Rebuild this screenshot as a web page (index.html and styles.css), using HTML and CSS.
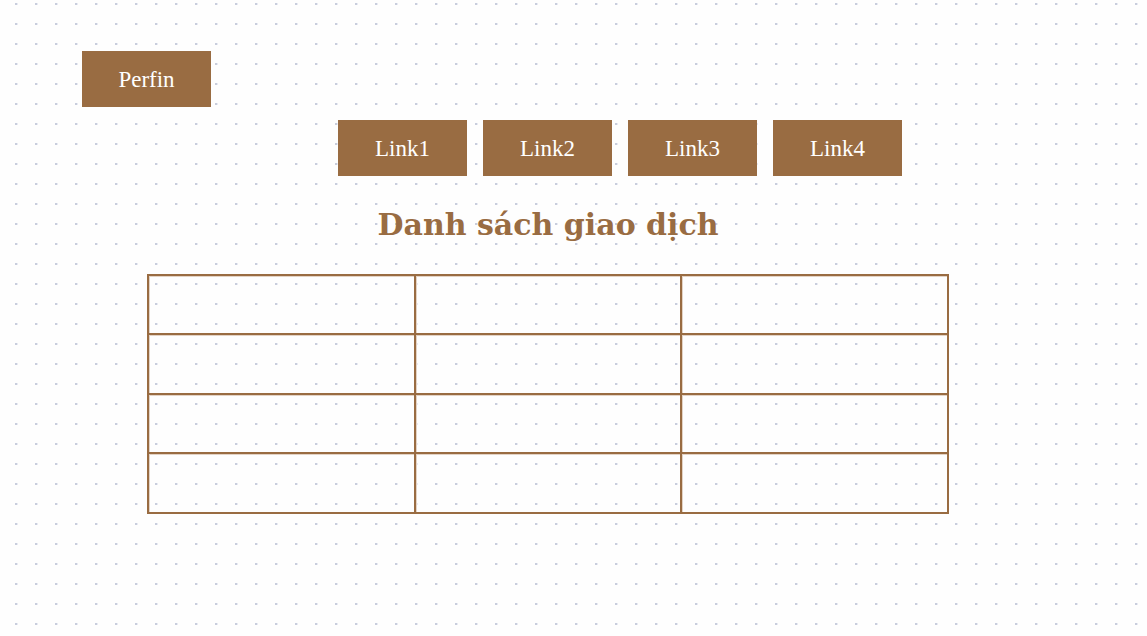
FILE: index.html
```html
<!DOCTYPE html>
<html lang="vi">
<head>
<meta charset="utf-8">
<meta name="viewport" content="width=device-width, initial-scale=1">
<title>Perfin</title>
<link rel="stylesheet" href="styles.css">
</head>
<body>
<header class="header">
<a class="box" href="#">Perfin</a>
<nav class="nav">
<a class="box" href="#">Link1</a>
<a class="box" href="#">Link2</a>
<a class="box" href="#">Link3</a>
<a class="box" href="#">Link4</a>
</nav>
</header>
<main class="main">
<h1 class="title">Danh sách giao dịch</h1>
<table class="table" aria-label="Danh sách giao dịch">
<tbody>
<tr><td></td><td></td><td></td></tr>
<tr><td></td><td></td><td></td></tr>
<tr><td></td><td></td><td></td></tr>
<tr><td></td><td></td><td></td></tr>
</tbody>
</table>
</main>
</body>
</html>
```
FILE: styles.css
```css
* {
  box-sizing: border-box;
}

body {
  margin: 0;
  min-height: 100vh;
  color: #996c42;
  /* The upper layer hides the vertical stripes below it, leaving a grid of dots */
  background:
    linear-gradient(transparent 2px, #fefefe 2px) 0 3px / 20px 20px,
    linear-gradient(90deg, #c8cddc 2px, #e9ebf2 2px 3px, #fefefe 3px) 15px 0 / 20px 20px;
}

.header {
  padding: 51px 82px 0;
}

.box {
  display: flex;
  align-items: center;
  justify-content: center;
  width: 129px;
  height: 56px;
  padding-top: 2px;
  background: #996c42;
  color: #ffffff;
  font: 23px/28px "Liberation Serif", serif;
  text-decoration: none;
}

.nav {
  display: flex;
  gap: 16px;
  margin: 13px 0 0 256px;
}

.main {
  margin: 0 198px 0 147px;
}

.title {
  margin: 29px 0;
  font: bold 30px/40px "DejaVu Serif", serif;
  text-align: center;
}

.table {
  width: 100%;
  table-layout: fixed;
  border-collapse: collapse;
}

.table td {
  height: 59px;
  padding: 0;
  border: 2px solid #996c42;
  box-shadow: inset 1px 1px #e3d3c5;
}

.table tr:nth-child(even) td {
  height: 60px;
}
```
